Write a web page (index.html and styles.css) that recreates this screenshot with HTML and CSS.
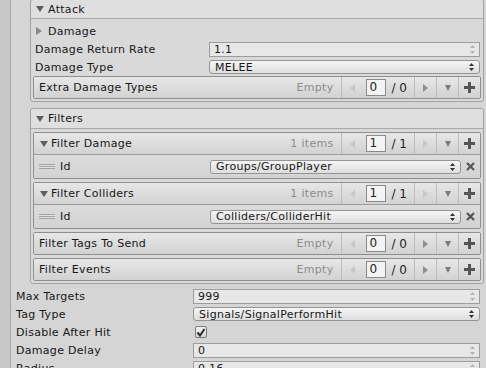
FILE: index.html
```html
<!DOCTYPE html>
<html lang="en">
<head>
<meta charset="UTF-8">
<title>Inspector</title>
<link rel="stylesheet" href="styles.css">
</head>
<body>

<div class="side"></div>

<div class="inspector">

    <div class="group attack">
        <div class="group-head"><span class="tri down"></span>Attack</div>
        <div class="group-body">
            <div class="row fold"><span class="tri right"></span>Damage</div>
            <div class="row">
                <span class="label">Damage Return Rate</span>
                <div class="field">1.1<svg class="spin" width="5" height="9" viewBox="0 0 5 9"><path d="M2.5 0L5 3H0Z M2.5 9L5 6H0Z"/></svg></div>
            </div>
            <div class="row">
                <span class="label">Damage Type</span>
                <div class="drop">MELEE<svg class="arr" width="5" height="8" viewBox="0 0 5 8"><path d="M2.5 0L5 3H0Z M2.5 8L5 5H0Z"/></svg></div>
            </div>
            <div class="list">
                <div class="list-head">
                    <span class="list-title">Extra Damage Types</span>
                    <div class="pager">
                        <span class="count">Empty</span>
                        <span class="pbtn off"><span class="tri left"></span></span>
                        <span class="page"><span class="page-num">0</span>/ 0</span>
                        <span class="pbtn"><span class="tri right"></span></span>
                        <span class="pbtn"><span class="tri down mid"></span></span>
                        <span class="pbtn"><svg width="11" height="11" viewBox="0 0 11 11"><path class="plus" d="M4 0h3v4h4v3H7v4H4V7H0V4h4Z"/></svg></span>
                    </div>
                </div>
            </div>
        </div>
    </div>

    <div class="group filters">
        <div class="group-head"><span class="tri down"></span>Filters</div>
        <div class="group-body">

            <div class="list">
                <div class="list-head">
                    <span class="list-title fold"><span class="tri down"></span>Filter Damage</span>
                    <div class="pager">
                        <span class="count">1 items</span>
                        <span class="pbtn off"><span class="tri left"></span></span>
                        <span class="page"><span class="page-num">1</span>/ 1</span>
                        <span class="pbtn off"><span class="tri right"></span></span>
                        <span class="pbtn"><span class="tri down mid"></span></span>
                        <span class="pbtn"><svg width="11" height="11" viewBox="0 0 11 11"><path class="plus" d="M4 0h3v4h4v3H7v4H4V7H0V4h4Z"/></svg></span>
                    </div>
                </div>
                <div class="list-item">
                    <span class="handle"></span>
                    <span class="item-label">Id</span>
                    <div class="drop">Groups/GroupPlayer<svg class="arr" width="5" height="8" viewBox="0 0 5 8"><path d="M2.5 0L5 3H0Z M2.5 8L5 5H0Z"/></svg></div>
                    <span class="remove"><svg width="9" height="9" viewBox="0 0 9 9"><path d="M1 1L8 8M8 1L1 8"/></svg></span>
                </div>
            </div>

            <div class="list">
                <div class="list-head">
                    <span class="list-title fold"><span class="tri down"></span>Filter Colliders</span>
                    <div class="pager">
                        <span class="count">1 items</span>
                        <span class="pbtn off"><span class="tri left"></span></span>
                        <span class="page"><span class="page-num">1</span>/ 1</span>
                        <span class="pbtn off"><span class="tri right"></span></span>
                        <span class="pbtn"><span class="tri down mid"></span></span>
                        <span class="pbtn"><svg width="11" height="11" viewBox="0 0 11 11"><path class="plus" d="M4 0h3v4h4v3H7v4H4V7H0V4h4Z"/></svg></span>
                    </div>
                </div>
                <div class="list-item">
                    <span class="handle"></span>
                    <span class="item-label">Id</span>
                    <div class="drop">Colliders/ColliderHit<svg class="arr" width="5" height="8" viewBox="0 0 5 8"><path d="M2.5 0L5 3H0Z M2.5 8L5 5H0Z"/></svg></div>
                    <span class="remove"><svg width="9" height="9" viewBox="0 0 9 9"><path d="M1 1L8 8M8 1L1 8"/></svg></span>
                </div>
            </div>

            <div class="list">
                <div class="list-head">
                    <span class="list-title">Filter Tags To Send</span>
                    <div class="pager">
                        <span class="count">Empty</span>
                        <span class="pbtn off"><span class="tri left"></span></span>
                        <span class="page"><span class="page-num">0</span>/ 0</span>
                        <span class="pbtn"><span class="tri right"></span></span>
                        <span class="pbtn"><span class="tri down mid"></span></span>
                        <span class="pbtn"><svg width="11" height="11" viewBox="0 0 11 11"><path class="plus" d="M4 0h3v4h4v3H7v4H4V7H0V4h4Z"/></svg></span>
                    </div>
                </div>
            </div>

            <div class="list">
                <div class="list-head">
                    <span class="list-title">Filter Events</span>
                    <div class="pager">
                        <span class="count">Empty</span>
                        <span class="pbtn off"><span class="tri left"></span></span>
                        <span class="page"><span class="page-num">0</span>/ 0</span>
                        <span class="pbtn"><span class="tri right"></span></span>
                        <span class="pbtn"><span class="tri down mid"></span></span>
                        <span class="pbtn"><svg width="11" height="11" viewBox="0 0 11 11"><path class="plus" d="M4 0h3v4h4v3H7v4H4V7H0V4h4Z"/></svg></span>
                    </div>
                </div>
            </div>

        </div>
    </div>

    <div class="props">
        <div class="row">
            <span class="label">Max Targets</span>
            <div class="field">999<svg class="spin" width="5" height="9" viewBox="0 0 5 9"><path d="M2.5 0L5 3H0Z M2.5 9L5 6H0Z"/></svg></div>
        </div>
        <div class="row">
            <span class="label">Tag Type</span>
            <div class="drop">Signals/SignalPerformHit<svg class="arr" width="5" height="8" viewBox="0 0 5 8"><path d="M2.5 0L5 3H0Z M2.5 8L5 5H0Z"/></svg></div>
        </div>
        <div class="row">
            <span class="label">Disable After Hit</span>
            <span class="check"><svg width="10" height="9" viewBox="0 0 10 9"><path d="M1.5 4.5L4 7.5L8.5 1"/></svg></span>
        </div>
        <div class="row">
            <span class="label">Damage Delay</span>
            <div class="field">0<svg class="spin" width="5" height="9" viewBox="0 0 5 9"><path d="M2.5 0L5 3H0Z M2.5 9L5 6H0Z"/></svg></div>
        </div>
        <div class="row">
            <span class="label">Radius</span>
            <div class="field">0.16<svg class="spin" width="5" height="9" viewBox="0 0 5 9"><path d="M2.5 0L5 3H0Z M2.5 9L5 6H0Z"/></svg></div>
        </div>
    </div>

</div>

</body>
</html>
```

FILE: styles.css
```css
* { margin: 0; padding: 0; box-sizing: border-box; }
body { font: 11px/1 "DejaVu Sans", Verdana, sans-serif; letter-spacing: 0.3px; color: #171717; background: #d5d5d5; display: flex; height: 368px; overflow: hidden; }

.side { width: 11px; flex: none; background: #c8c8c8; border-right: 1px solid #a6a6a6; }
.inspector { flex: 1; padding: 0 2px 0 5px; }

/* triangles */
.tri { display: inline-block; width: 0; height: 0; flex: none; }
.tri.down { border-left: 4px solid transparent; border-right: 4px solid transparent; border-top: 6px solid #5e5e5e; margin-right: 4px; }
.tri.right { border-top: 4px solid transparent; border-bottom: 4px solid transparent; border-left: 6px solid #8a8a8a; margin-right: 6px; }
.tri.left { border-top: 4px solid transparent; border-bottom: 4px solid transparent; border-right: 5px solid #c6c6c6; }
.pbtn .tri { margin: 0; }
.pbtn .tri.right { border-left-width: 5px; border-left-color: #8e8e8e; }
.pbtn.off .tri.right { border-left-color: #c6c6c6; }
.tri.down.mid { border-left-width: 3.5px; border-right-width: 3.5px; border-top: 6px solid #7a7a7a; }

/* boxes */
.group { margin-left: 14px; border: 1px solid #a3a3a3; border-radius: 3px; background: #d9d9d9; }
.group.attack { margin-top: -1px; }
.group + .group { margin-top: 6px; }
.group-head { height: 19px; display: flex; align-items: center; padding-left: 5px; background: #dfdfdf; border-bottom: 1px solid #a9a9a9; border-radius: 3px 3px 0 0; }
.filters .group-head { height: 20px; }
.group-body { display: flex; flex-direction: column; padding: 3px 2px 2px; }
.filters .group-body { gap: 3px; }

/* rows */
.row { height: 18px; display: flex; align-items: center; padding: 0 1px 0 2px; }
.row.fold { padding-left: 3px; }
.label { width: 174px; flex: none; white-space: nowrap; }

.field { flex: 1; height: 15px; display: flex; align-items: center; justify-content: space-between; padding: 0 4px 0 4px; background: #e7e7e7; border: 1px solid #9d9d9d; }
.field .spin { fill: #b3b3b3; }
.drop { flex: 1; height: 14px; display: flex; align-items: center; justify-content: space-between; padding: 0 5px 0 5px; background: linear-gradient(#f5f5f5, #dedede); border: 1px solid #959595; border-radius: 3px; }
.drop .arr { fill: #333; }

.check { width: 12px; height: 12px; margin-left: 2px; display: flex; align-items: center; justify-content: center; border: 1px solid #7b7b7b; border-radius: 2px; background: linear-gradient(#f2f2f2, #d6d6d6); }
.check path { fill: none; stroke: #2b2b2b; stroke-width: 2; }

/* reorderable lists */
.list { border: 1px solid #8f8f8f; border-radius: 2px; background: #d7d7d7; }
.list-head { height: 21px; display: flex; align-items: center; background: linear-gradient(#e7e7e7, #d2d2d2); }
.list-title { flex: 1; display: flex; align-items: center; padding-left: 5px; white-space: nowrap; }
.list-title.fold { padding-left: 6px; }
.list-title.fold .tri.down { margin-right: 3px; }

.pager { display: flex; align-self: stretch; }
.count { align-self: center; color: #8c8c8c; padding-right: 7px; }
.pbtn { width: 22px; display: flex; align-items: center; justify-content: center; border-left: 1px solid #bdbdbd; }
.page { display: flex; align-items: center; gap: 6px; padding: 0 7px 0 3px; font-size: 12px; letter-spacing: 0; color: #222; }
.page-num { width: 20px; height: 17px; line-height: 15px; padding-left: 3px; border: 1px solid #8a8a8a; background: #f3f3f3; }
.plus { fill: #555; }

.list-item { height: 24px; display: flex; align-items: center; padding-left: 5px; border-top: 1px solid #9c9c9c; background: linear-gradient(#dbdbdb, #d3d3d3); }
.handle { width: 16px; height: 5px; margin-right: 5px; flex: none; background: repeating-linear-gradient(#a2a2a2 0 1px, #e2e2e2 1px 2px); }
.item-label { width: 150px; flex: none; }
.list-item .drop { height: 14px; }
.remove { width: 19px; flex: none; display: flex; justify-content: center; }
.remove path { stroke: #555; stroke-width: 2.2; }

/* plain properties */
.props { margin-top: 3px; padding-right: 4px; }
.props .row { padding: 0; }
.props .label { width: 177px; }
```
